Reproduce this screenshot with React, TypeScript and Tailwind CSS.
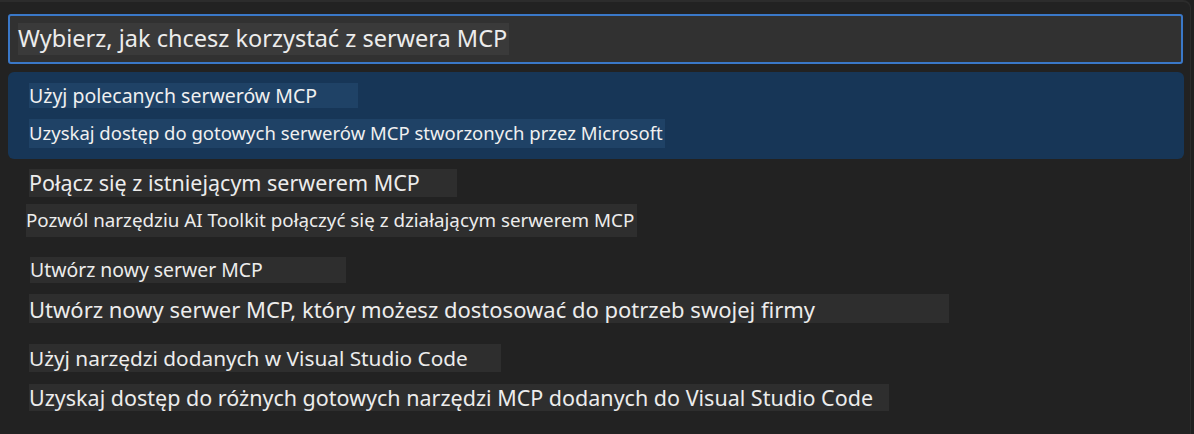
export default function App() {
  const font = { fontFamily: '"Noto Sans", "Open Sans", sans-serif' }

  return (
    <main style={font} className="w-[1194px] h-[434px] bg-[#1f1f1f] overflow-hidden">
      <div className="w-[1191px] h-[434px] bg-[#222222] border-t-2 border-r border-[#2c2c2c] rounded-tr-[8px] px-[8px] pt-[12px]">
        <div className="h-[50px] w-[1175px] bg-[#313131] border-2 border-[#3a78c8] rounded-[3px] flex items-center pl-[8px]">
          <span className="bg-[#3a3a3a] h-[32px] w-[491px] flex items-center text-[23.5px] text-[#ececec] leading-none whitespace-nowrap">
            Wybierz, jak chcesz korzystać z serwera MCP
          </span>
        </div>

        <div className="mt-[8px] h-[87px] w-[1176px] bg-[#173657] rounded-[6px] pl-[21px] pt-[11px] whitespace-nowrap">
          <div className="bg-[#1f4266] h-[25px] w-[329px] flex items-center text-[19.5px] text-[#f0f0f0] leading-none">
            Użyj polecanych serwerów MCP
          </div>
          <div className="mt-[11px] bg-[#1f4266] h-[29px] w-[636px] flex items-center text-[18.5px] text-[#f0f0f0] leading-none">
            Uzyskaj dostęp do gotowych serwerów MCP stworzonych przez Microsoft
          </div>
        </div>

        <div className="pl-[21px] text-[#ececec] leading-none whitespace-nowrap">
          <div className="mt-[10px] bg-[#2e2e2e] h-[28px] w-[428px] flex items-center text-[21.5px]">
            Połącz się z istniejącym serwerem MCP
          </div>
          <div className="mt-[7px] -ml-[3px] bg-[#2e2e2e] h-[33px] w-[611px] flex items-center text-[18.8px]">
            Pozwól narzędziu AI Toolkit połączyć się z działającym serwerem MCP
          </div>
          <div className="mt-[20px] ml-[1px] bg-[#2e2e2e] h-[26px] w-[316px] flex items-center text-[19.4px]">
            Utwórz nowy serwer MCP
          </div>
          <div className="mt-[11px] bg-[#2e2e2e] h-[29px] w-[920px] flex items-center text-[22px]">
            Utwórz nowy serwer MCP, który możesz dostosować do potrzeb swojej firmy
          </div>
          <div className="mt-[21px] bg-[#2e2e2e] h-[28px] w-[472px] flex items-center text-[20.8px]">
            Użyj narzędzi dodanych w Visual Studio Code
          </div>
          <div className="mt-[12px] bg-[#2e2e2e] h-[27px] w-[860px] flex items-center text-[21.5px]">
            Uzyskaj dostęp do różnych gotowych narzędzi MCP dodanych do Visual Studio Code
          </div>
        </div>
      </div>
    </main>
  )
}
